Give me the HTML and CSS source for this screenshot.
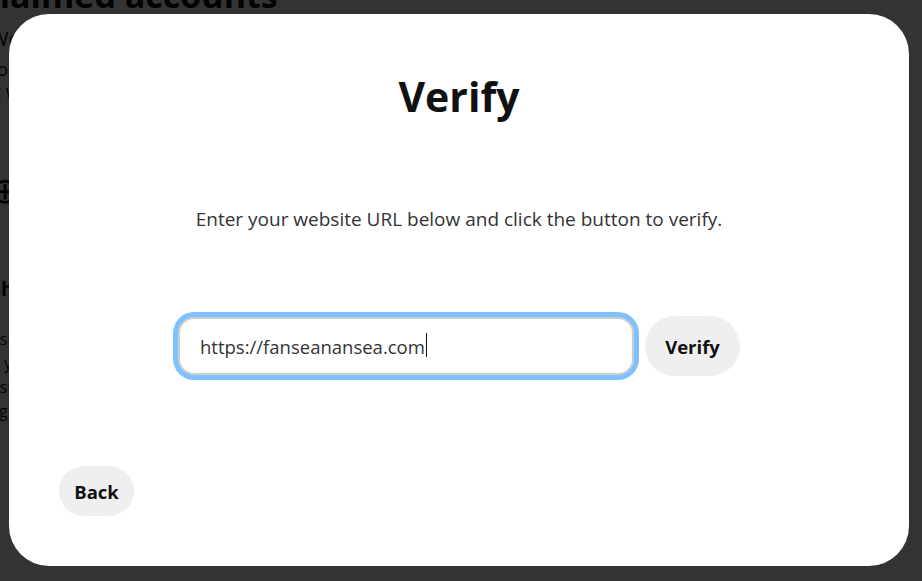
FILE: index.html
```html
<!DOCTYPE html>
<html lang="en">
<head>
<meta charset="utf-8">
<title>Verify</title>
<link rel="stylesheet" href="styles.css">
</head>
<body>
<div class="page">
  <h1 class="page-title">Claimed accounts</h1>
  <p class="page-lead">We found your website and other accounts</p>
  <p class="page-text">rose to connect with Pinterest</p>
  <p class="page-text">it will take a few minutes</p>
  <div class="page-icon">&#8853;</div>
  <h2 class="page-sub">Sharing</h2>
  <p class="page-line">nsights from your claimed accounts</p>
  <p class="page-line">n your profile</p>
  <p class="page-line">ustomise your Pins</p>
  <p class="page-line">ag your content</p>
</div>

<div class="overlay">
  <div class="modal" role="dialog" aria-labelledby="verify-title">
    <h2 class="modal-title" id="verify-title">Verify</h2>
    <p class="modal-text">Enter your website URL below and click the button to verify.</p>
    <div class="verify-row">
      <div class="field">
        <input class="url-input" type="text" value="https://fanseanansea.com" aria-label="Website URL">
        <span class="caret"></span>
      </div>
      <button class="btn btn-verify" type="button">Verify</button>
    </div>
    <div class="modal-footer">
      <button class="btn btn-back" type="button">Back</button>
    </div>
  </div>
</div>
</body>
</html>
```

FILE: styles.css
```css
html, body {
  margin: 0;
  padding: 0;
  background: #ffffff;
  font-family: "Open Sans", "Noto Sans", "Liberation Sans", sans-serif;
  color: #111111;
}

.page {
  margin-left: -10px;
  padding-top: 1px;
}

.page-title {
  font-size: 34px;
  font-weight: 700;
  line-height: 40px;
  margin: -26px 0 0 -12px;
}

.page-lead {
  font-size: 20px;
  line-height: 24px;
  margin: 12px 0 0 0;
}

.page-text {
  font-size: 18px;
  line-height: 22px;
  margin: 7px 0 0 0;
}

.page-text + .page-text {
  margin-top: 0;
}

.page-icon {
  font-size: 36px;
  line-height: 40px;
  margin-top: 68px;
}

.page-sub {
  font-size: 20px;
  font-weight: 700;
  line-height: 28px;
  margin: 65px 0 0 0;
}

.page-line {
  font-size: 16px;
  line-height: 24px;
  margin: 0;
}

.page-sub + .page-line {
  margin-top: 24px;
}

.overlay {
  position: fixed;
  inset: 0;
  background: rgba(0, 0, 0, 0.8);
  display: flex;
  align-items: flex-start;
  justify-content: flex-start;
  padding: 14px 0 0 9px;
}

.modal {
  width: 900px;
  height: 552px;
  box-sizing: border-box;
  background: #ffffff;
  border-radius: 40px;
  padding: 0 50px 50px 50px;
  display: flex;
  flex-direction: column;
  align-items: center;
}

.modal-title {
  margin: 60px 0 0 0;
  font-size: 41px;
  line-height: 44px;
  font-weight: 700;
  color: #111111;
}

.modal-text {
  margin: 89px 0 0 0;
  font-size: 19px;
  line-height: 24px;
  color: #333333;
}

.verify-row {
  margin-top: 85px;
  display: flex;
  align-items: center;
  gap: 11px;
}

.field {
  position: relative;
  display: flex;
}

.url-input {
  width: 456px;
  height: 58px;
  box-sizing: border-box;
  border: 2px solid #cdcdcd;
  border-radius: 16px;
  padding: 0 18px 0 20px;
  font-family: inherit;
  font-size: 18.5px;
  color: #333333;
  background: #ffffff;
  outline: none;
  box-shadow: 0 0 0 5px #80c2ff;
}

.caret {
  position: absolute;
  left: 248px;
  top: 16px;
  width: 1px;
  height: 24px;
  background: #111111;
}

.btn {
  border: none;
  background: #efefef;
  color: #111111;
  font-family: inherit;
  font-weight: 700;
  font-size: 18.5px;
  border-radius: 999px;
  cursor: pointer;
  padding: 0;
}

.btn-verify {
  width: 95px;
  height: 60px;
}

.modal-footer {
  margin-top: auto;
  align-self: stretch;
  display: flex;
}

.btn-back {
  width: 75px;
  height: 50px;
}
```
